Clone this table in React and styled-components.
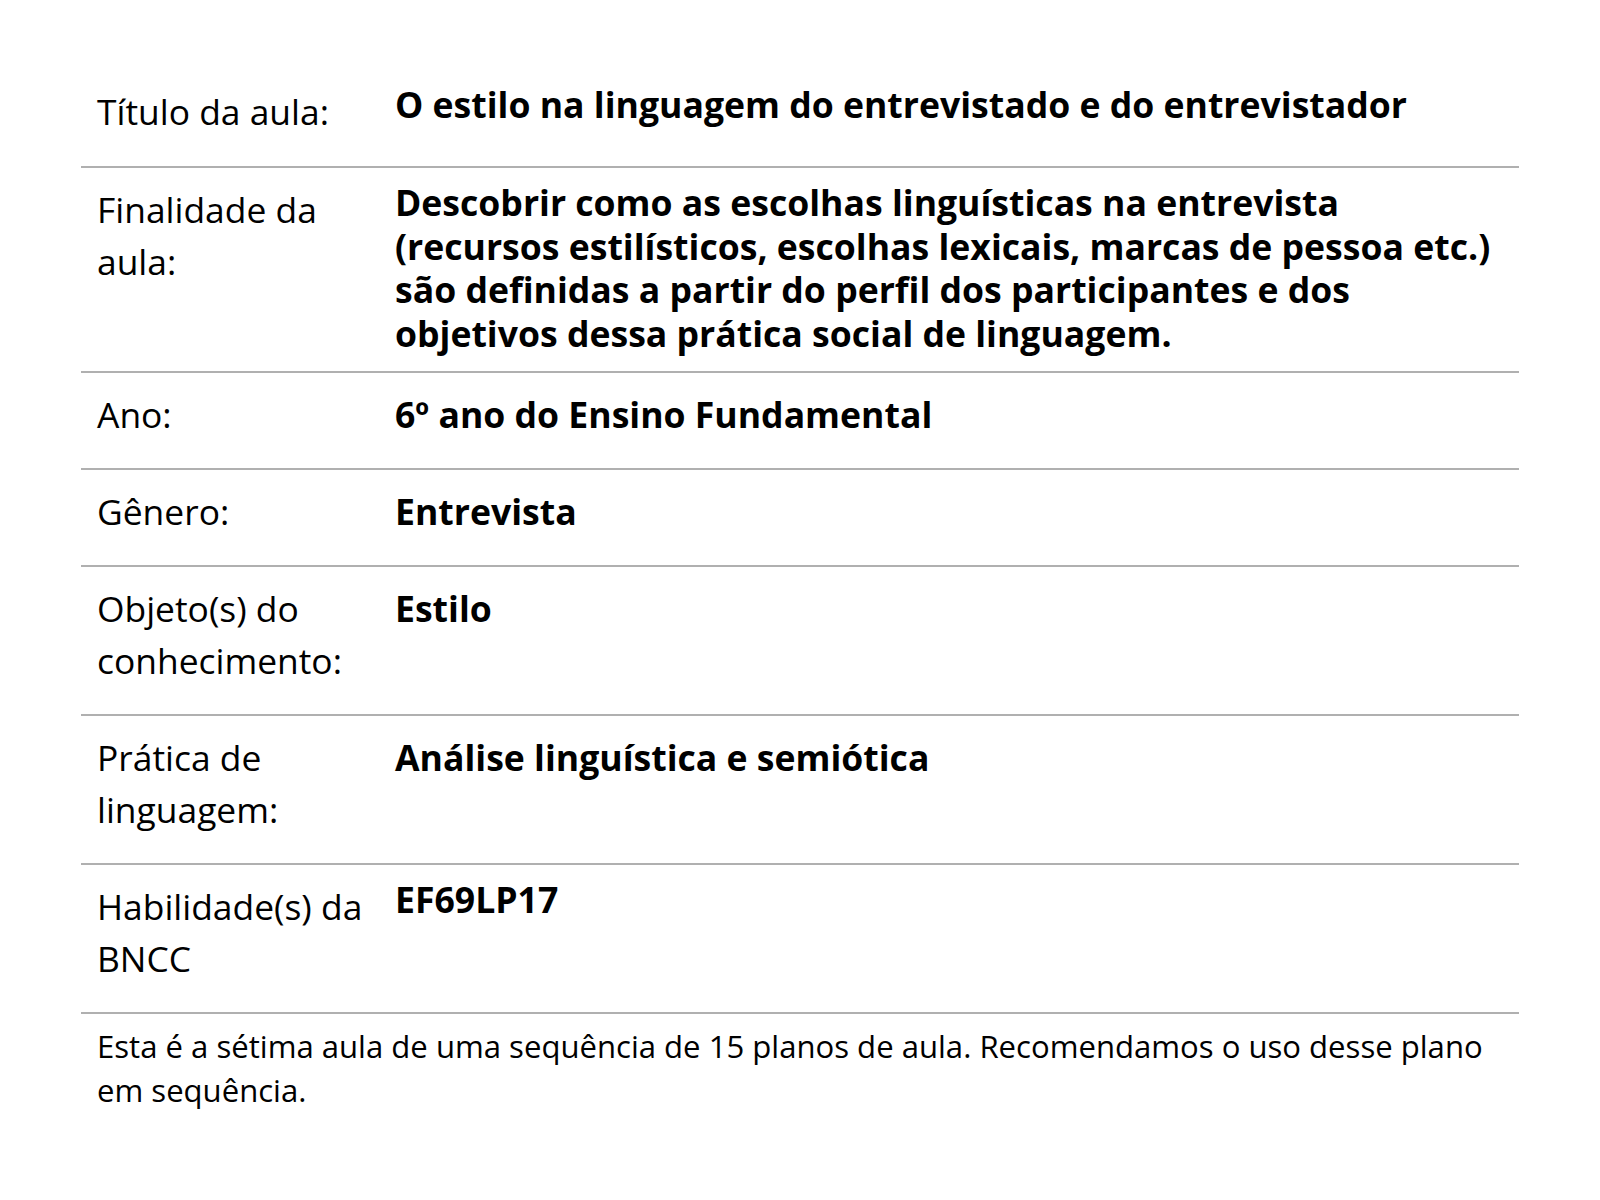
import React from "react";
import styled, { createGlobalStyle } from "styled-components";

const Global = createGlobalStyle`
  html, body { margin: 0; padding: 0; background: #ffffff; }
  body { font-family: "Open Sans", "Noto Sans", sans-serif; color: #000000; }
`;

const Page = styled.div`
  width: 1600px;
  min-height: 1200px;
  box-sizing: border-box;
  padding: 69px 81px 0 81px;
`;

const Table = styled.div`
  display: flex;
  flex-direction: column;
`;

const Row = styled.div`
  display: grid;
  grid-template-columns: 298px 1fr;
  padding: 13px 16px 16px 16px;
  border-bottom: 2px solid #b0b0b0;

  &:first-child {
    padding-top: 14px;
    padding-bottom: 17px;
  }
`;

const Label = styled.div`
  font-size: 35.4px;
  line-height: 52px;
  font-weight: 400;
  padding: 2px 0 12px 0;
`;

const Value = styled.div`
  font-size: 35.6px;
  line-height: 43.5px;
  font-weight: 700;
  padding-top: ${(p) => (p.$raised ? "0" : "7px")};
`;

const Note = styled.p`
  margin: 0;
  padding: 10px 16px 0 16px;
  font-size: 31.1px;
  line-height: 44px;
`;

const rows = [
  { label: "Título da aula:", value: "O estilo na linguagem do entrevistado e do entrevistador", raised: true },
  {
    label: "Finalidade da aula:",
    value:
      "Descobrir como as escolhas linguísticas na entrevista (recursos estilísticos, escolhas lexicais, marcas de pessoa etc.) são definidas a partir do perfil dos participantes e dos objetivos dessa prática social de linguagem.",
    raised: true,
  },
  { label: "Ano:", value: "6º ano do Ensino Fundamental" },
  { label: "Gênero:", value: "Entrevista" },
  { label: "Objeto(s) do conhecimento:", value: "Estilo" },
  { label: "Prática de linguagem:", value: "Análise linguística e semiótica" },
  { label: "Habilidade(s) da BNCC", value: "EF69LP17", raised: true },
];

export default function App() {
  return (
    <>
      <Global />
      <Page>
        <Table>
          {rows.map((r) => (
            <Row key={r.label}>
              <Label>{r.label}</Label>
              <Value $raised={r.raised}>{r.value}</Value>
            </Row>
          ))}
        </Table>
        <Note>
          Esta é a sétima aula de uma sequência de 15 planos de aula. Recomendamos o uso desse plano em sequência.
        </Note>
      </Page>
    </>
  );
}
